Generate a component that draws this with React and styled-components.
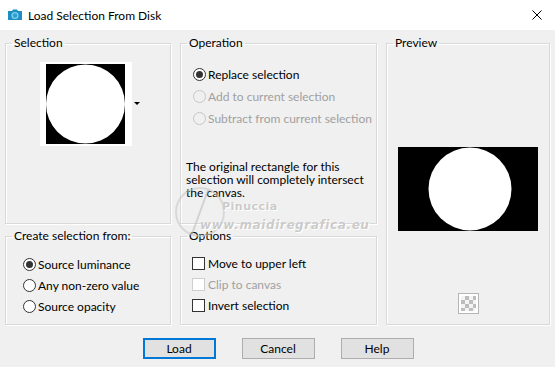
import React from "react";
import styled, { createGlobalStyle } from "styled-components";

const Global = createGlobalStyle`
  html, body { margin: 0; padding: 0; }
  body {
    width: 555px; height: 367px; overflow: hidden;
    background: #f0f0f0;
    font-family: Lato, "Liberation Sans", sans-serif;
    font-size: 12px; color: #000;
  }
`;

const Window = styled.div`
  width: 555px; height: 367px; position: relative;
  display: flex; flex-direction: column;
  background: #f0f0f0;
`;

const TitleBar = styled.div`
  height: 30px; background: #fff;
  display: flex; align-items: center;
  padding: 0 7px 0 7px; box-sizing: border-box;
  gap: 5px;
`;

const TitleText = styled.span`
  flex: 1; font-size: 12px; color: #000; padding-top: 1px;
`;

const CloseBtn = styled.div`
  width: 10px; height: 10px; margin-right: 6px; display: flex;
`;

const Main = styled.div`
  display: grid;
  grid-template-columns: 166px 197px 164px;
  grid-template-rows: 189px 97px;
  column-gap: 9px; row-gap: 4px;
  padding: 5px 0 0 5px;
`;

const Group = styled.fieldset`
  margin: 0; padding: 0; min-width: 0;
  border: 1px solid #d9d9d9;
  box-shadow: inset 1px 1px 0 #fff, 1px 1px 0 #fff;
  grid-column: ${(p) => p.$col};
  grid-row: ${(p) => p.$row};
  display: flex; flex-direction: column;
  align-items: ${(p) => p.$center ? "center" : "stretch"};
  box-sizing: border-box;
`;

const Legend = styled.legend`
  padding: 0 2px; margin-left: 6px;
  font-size: 12px; line-height: 16px; color: #000;
`;

const ThumbFrame = styled.div`
  margin: 11px 0 0 34px; width: 92px; height: 84px;
  background: #fff; display: flex; align-items: center; padding-left: 6px;
  box-sizing: border-box; position: relative;
`;

const DropArrow = styled.div`
  position: absolute; left: 94px; top: 40px;
  width: 0; height: 0;
  border-left: 3px solid transparent; border-right: 3px solid transparent;
  border-top: 3px solid #000;
`;

const Row = styled.label`
  display: flex; align-items: center; height: ${(p) => p.$h || 22}px;
  gap: ${(p) => p.$gap || 2}px; white-space: nowrap;
  color: ${(p) => p.$disabled ? "#a0a0a0" : "#000"};
  font-size: 12px;
`;

const Radio = styled.span`
  width: 13px; height: 13px; border-radius: 50%; box-sizing: border-box;
  border: 1px solid ${(p) => p.$disabled ? "#c6c6c6" : "#333"};
  background: ${(p) => p.$disabled ? "#f0f0f0" : "#fff"};
  display: flex; align-items: center; justify-content: center; flex: none;
  &::after {
    content: ""; display: ${(p) => p.$checked ? "block" : "none"};
    width: 7px; height: 7px; border-radius: 50%; background: #333;
  }
`;

const Check = styled.span`
  width: 13px; height: 13px; box-sizing: border-box; flex: none;
  border: 1px solid ${(p) => p.$disabled ? "#cfcfcf" : "#333"};
  background: #fff;
`;

const List = styled.div`
  display: flex; flex-direction: column;
  padding: ${(p) => p.$pad};
`;

const Note = styled.p`
  margin: 31px 0 0 5px; line-height: 13px; font-size: 12px; color: #000;
  white-space: nowrap;
`;

const PreviewImg = styled.div`
  margin-top: 96px; width: 140px; height: 84px; display: flex;
`;

const Checker = styled.div`
  margin-top: 62px; width: 21px; height: 21px; box-sizing: border-box;
  border: 1px solid #b5b5b5; padding: 2px; background: #fff;
  &::before {
    content: ""; display: block; width: 15px; height: 15px;
    background: repeating-conic-gradient(#bdbdbd 0 25%, #f4f4f4 0 50%) 0 0 / 8px 8px;
  }
`;

const Buttons = styled.div`
  display: flex; justify-content: center; gap: 26px;
  margin-top: 13px; padding-left: 1px;
`;

const Button = styled.button`
  width: 73px; height: 21px; box-sizing: border-box; margin: 0; padding: 0;
  background: #e1e1e1; font-family: inherit; font-size: 12px; color: #000;
  border: ${(p) => p.$default ? "2px solid #0078d7" : "1px solid #adadad"};
`;

const Watermark = styled.div`
  position: absolute; left: 182px; top: 178px; width: 200px; height: 60px;
  pointer-events: none; color: rgba(150,150,150,0.5);
  text-shadow: 0 0 1px #fff, 1px 1px 0 #fff;
  font-family: "DejaVu Sans", sans-serif; font-weight: bold;
`;

const WmName = styled.div`
  position: absolute; left: 40px; top: 22px; font-size: 11px; letter-spacing: 0.5px;
`;
const WmUrl = styled.div`
  position: absolute; left: 18px; top: 40px; font-size: 12px; letter-spacing: 0.6px; font-style: italic;
`;

function AppIcon() {
  return (
    <svg width="16" height="14" viewBox="0 0 16 14">
      <path d="M1 3 h4 l1 -1.5 h4 l1 1.5 h4 v9 h-14 z" fill="#1f8fc2" />
      <circle cx="8" cy="7.5" r="3.6" fill="#7fd0ef" />
      <circle cx="8" cy="7.5" r="2.2" fill="#2aa0d4" />
    </svg>
  );
}

function CircleImage({ w, h, r, cx, cy }) {
  return (
    <svg width={w} height={h} viewBox={`0 0 ${w} ${h}`}>
      <rect width={w} height={h} fill="#000" />
      <circle cx={cx} cy={cy} r={r} fill="#fff" />
    </svg>
  );
}

export default function App() {
  return (
    <Window>
      <Global />
      <TitleBar>
        <AppIcon />
        <TitleText>Load Selection From Disk</TitleText>
        <CloseBtn>
          <svg width="10" height="10" viewBox="0 0 10 10">
            <path d="M0.5 0.5 L9.5 9.5 M9.5 0.5 L0.5 9.5" stroke="#000" strokeWidth="1" />
          </svg>
        </CloseBtn>
      </TitleBar>
      <Main>
        <Group $col="1" $row="1">
          <Legend>Selection</Legend>
          <ThumbFrame>
            <CircleImage w={79} h={80} r={39.5} cx={39.5} cy={40} />
            <DropArrow />
          </ThumbFrame>
        </Group>
        <Group $col="2" $row="1">
          <Legend>Operation</Legend>
          <List $pad="12px 0 0 12px">
            <Row><Radio $checked />Replace selection</Row>
            <Row $disabled><Radio $disabled />Add to current selection</Row>
            <Row $disabled><Radio $disabled />Subtract from current selection</Row>
          </List>
          <Note>
            The original rectangle for this<br />
            selection will completely intersect<br />
            the canvas.
          </Note>
        </Group>
        <Group $col="3" $row="1 / span 2" $center>
          <Legend>Preview</Legend>
          <PreviewImg>
            <CircleImage w={140} h={84} r={41.5} cx={72} cy={42} />
          </PreviewImg>
          <Checker />
        </Group>
        <Group $col="1" $row="2">
          <Legend>Create selection from:</Legend>
          <List $pad="10px 0 0 17px">
            <Row $h={21}><Radio $checked />Source luminance</Row>
            <Row $h={21}><Radio />Any non-zero value</Row>
            <Row $h={21}><Radio />Source opacity</Row>
          </List>
        </Group>
        <Group $col="2" $row="2">
          <Legend>Options</Legend>
          <List $pad="9px 0 0 11px">
            <Row $h={21} $gap={3}><Check />Move to upper left</Row>
            <Row $h={21} $gap={3} $disabled><Check $disabled />Clip to canvas</Row>
            <Row $h={21} $gap={3}><Check />Invert selection</Row>
          </List>
        </Group>
      </Main>
      <Buttons>
        <Button $default>Load</Button>
        <Button>Cancel</Button>
        <Button>Help</Button>
      </Buttons>
      <Watermark>
        <svg width="60" height="60" viewBox="0 0 60 60" style={{ position: "absolute", left: -12, top: 0 }}>
          <circle cx="30" cy="34" r="24" fill="none" stroke="rgba(200,200,200,0.6)" strokeWidth="2" />
          <path d="M38 12 L22 56" stroke="rgba(190,190,190,0.6)" strokeWidth="2" />
        </svg>
        <WmName>Pinuccia</WmName>
        <WmUrl>www.maidiregrafica.eu</WmUrl>
      </Watermark>
    </Window>
  );
}
